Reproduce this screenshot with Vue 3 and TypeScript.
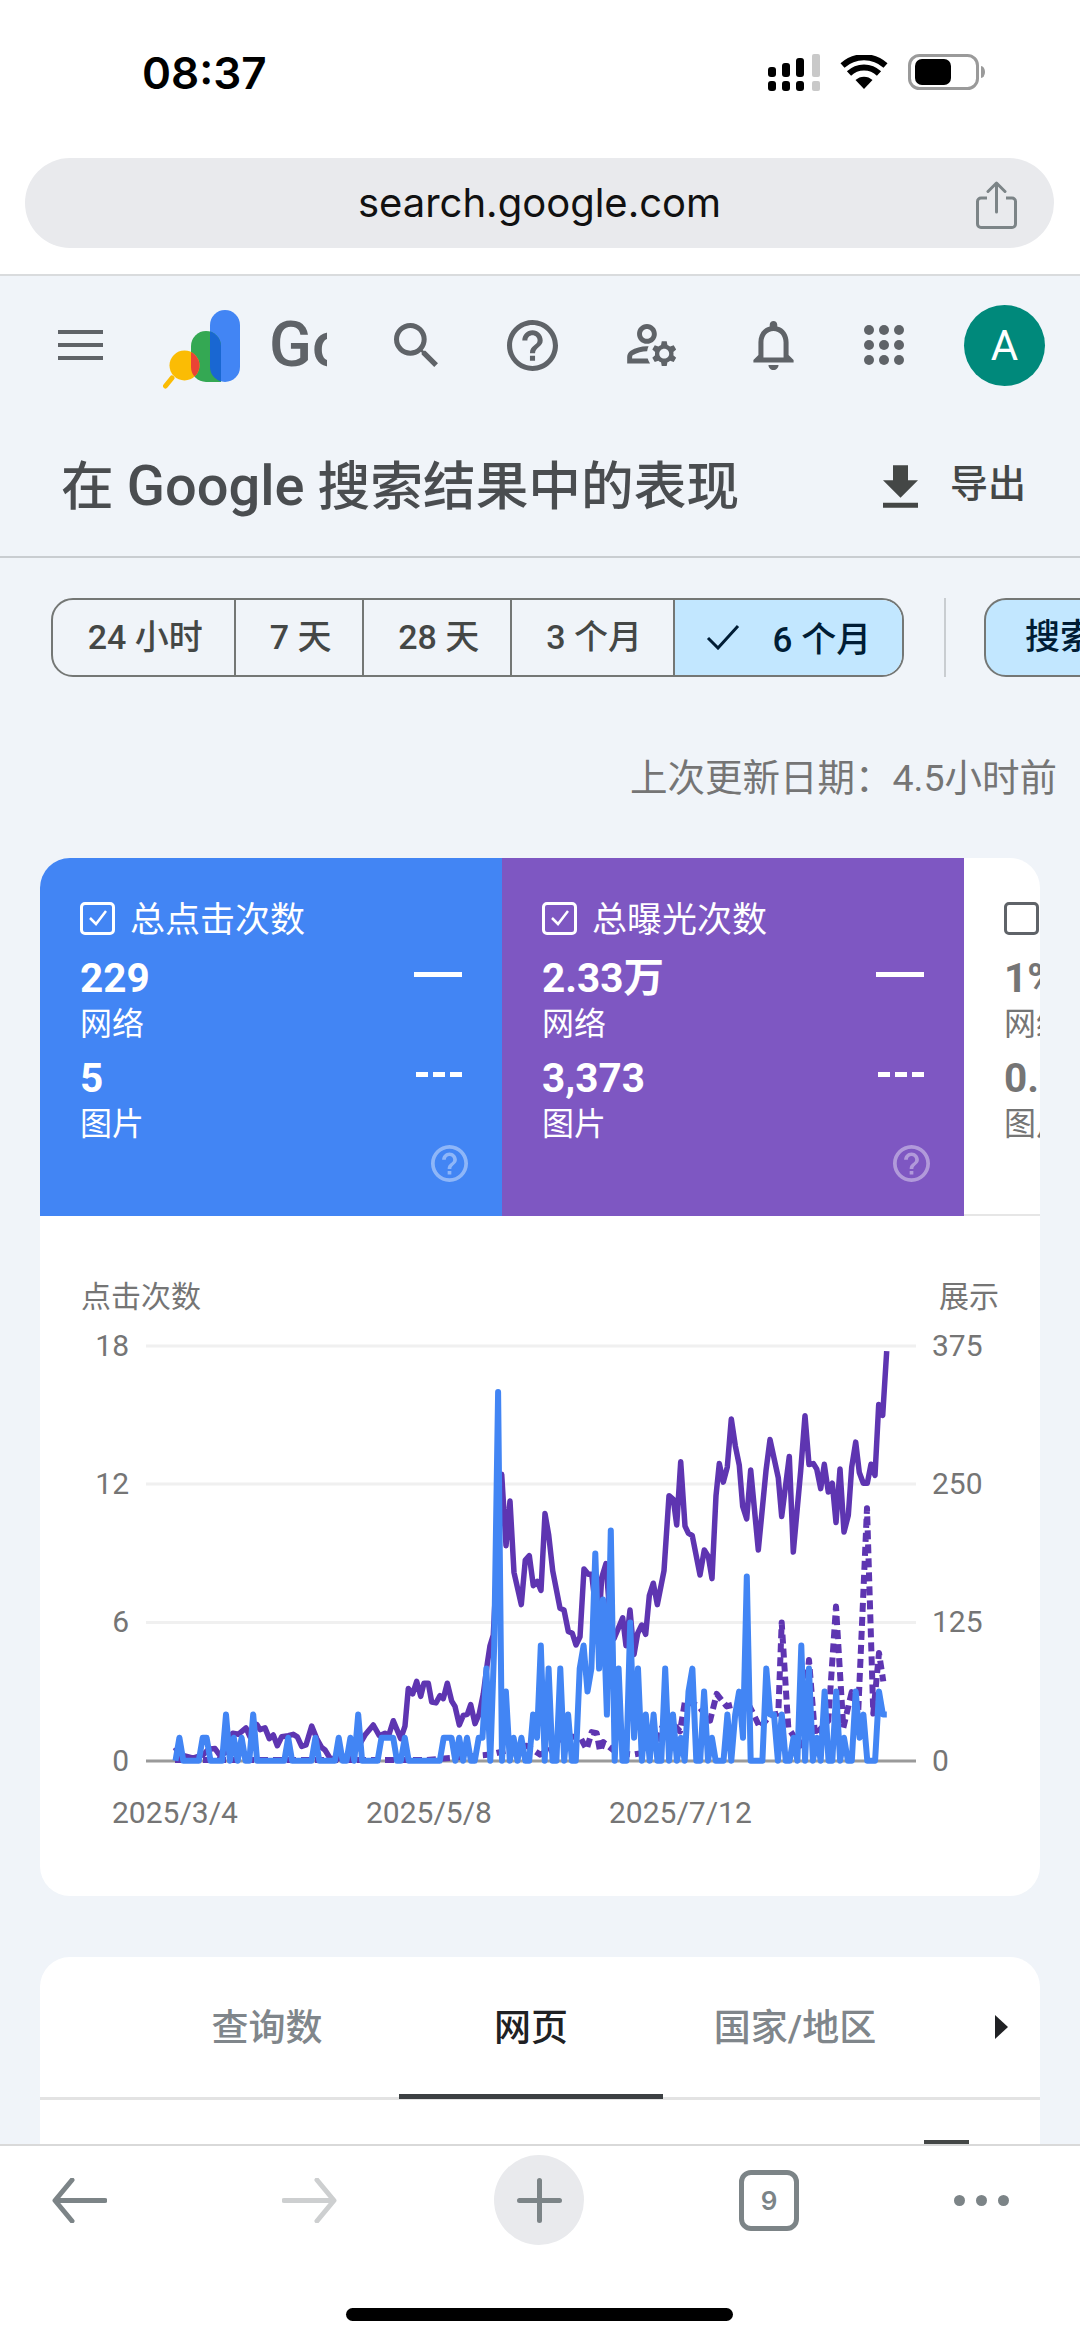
<script setup lang="ts">
type Pt = [number, number]

const chips = [
  { label: '24 小时', width: 183 },
  { label: '7 天', width: 128 },
  { label: '28 天', width: 148 },
  { label: '3 个月', width: 163 },
  { label: '6 个月', width: 227, on: true },
]

const tiles = [
  { cls: 'blue', title: '总点击次数', a: '229', b: '5', checked: true },
  { cls: 'purple', title: '总曝光次数', a: '2.33万', b: '3,373', checked: true },
  { cls: 'plain', title: '平均点击率', a: '1%', b: '0.2%', checked: false },
]

const helpPath =
  'M11 18h2v-2h-2v2zm1-16C6.48 2 2 6.48 2 12s4.48 10 10 10 10-4.48 10-10S17.52 2 12 2zm0 18c-4.41 0-8-3.59-8-8s3.59-8 8-8 8 3.59 8 8-3.59 8-8 8zm0-14c-2.21 0-4 1.79-4 4h2c0-1.1.9-2 2-2s2 .9 2 2c0 2-3 1.75-3 5h2c0-2.25 3-2.5 3-5 0-2.21-1.79-4-4-4z'

const left: Pt[] = [
  [345,1365],[360,1385],[400,1395],[430,1385],[445,1370],[465,1368],[480,1388],[495,1380],[518,1325],[535,1328],[558,1310],[570,1335],[590,1300],[600,1315],[615,1310],[628,1340],[640,1330],[652,1360],[665,1335],[685,1332],[700,1328],[712,1335],[725,1362],[738,1358],[755,1305],[770,1340],[785,1365],[795,1372],[810,1395],[830,1398],[870,1385],[890,1370],[915,1330],[940,1302],[958,1332],[975,1325],[985,1335],[1000,1290],[1022,1340],[1035,1305],[1045,1200],[1058,1215],[1070,1180],[1082,1222],[1092,1185],[1105,1185],[1115,1238],[1128,1240],[1140,1220],[1150,1228],[1162,1185],[1175,1235],[1185,1250],[1198,1302],[1210,1275],[1222,1272],[1232,1245],[1245,1298],[1258,1270],[1270,1215],[1282,1130],[1290,1080],
]
const right: Pt[] = [
  [100,1050],[113,800],[125,600],[138,800],[150,675],[162,875],[184,965],[196,840],[208,828],[220,912],[232,900],[243,925],[255,710],[266,770],[278,870],[300,975],[312,980],[325,1040],[337,1045],[348,1078],[360,1055],[372,865],[385,880],[395,880],[405,960],[418,1000],[425,890],[438,850],[450,1000],[462,1060],[488,1002],[498,1080],[510,980],[522,1105],[533,1045],[545,1022],[557,1048],[568,940],[580,905],[592,965],[612,870],[627,660],[640,670],[650,742],[662,565],[675,745],[685,765],[697,772],[720,882],[733,812],[745,830],[756,892],[768,660],[778,570],[790,622],[802,580],[814,445],[826,520],[838,575],[848,690],[860,725],[872,588],[895,812],[918,590],[930,503],[955,610],[965,718],[988,550],[1000,818],[1022,590],[1035,436],[1047,573],[1060,570],[1070,585],[1082,640],[1093,572],[1105,650],[1117,625],[1128,735],[1140,585],[1152,762],[1165,715],[1175,580],[1187,510],[1198,595],[1210,625],[1222,625],[1233,572],[1245,603],[1256,405],[1268,435],[1280,255],
]
const dashedRight: Pt[] = [
  [-855,1400],[-100,1400],[90,1385],[200,1360],[240,1385],[285,1365],[300,1335],[360,1335],[380,1370],[395,1322],[410,1325],[420,1375],[430,1350],[470,1380],[520,1385],[550,1380],[590,1360],[605,1310],[640,1300],[660,1320],[675,1235],[715,1248],[750,1290],[770,1215],[800,1250],[860,1235],[880,1270],[900,1310],[930,1275],[955,1270],[965,1015],[985,1310],[1020,1360],[1047,1120],[1065,1330],[1105,1290],[1128,970],[1150,1310],[1175,1210],[1195,1260],[1221,695],[1240,1270],[1257,1100],[1270,1180],
]
const peaksLeft: Pt[] = [
  [358,1],[428,1],[440,1],[498,2],[522,1],[545,1],[580,2],[685,1],[767,1],[837,1],[872,1],[895,2],[962,1],[975,1],[985,1],[998,1],[1033,1],[1150,1],[1162,1],[1173,1],[1197,1],[1220,1],
]
const peaksRight: Pt[] = [
  [55,1],[68,1],[80,4],[103,5],[115,16],[138,3],[160,1],[184,1],[218,2],[230,1],[242,5],[265,4],[300,4],[323,2],[358,4],[370,5],[382,3],[393,4],[405,9],[418,4],[428,7],[442,2],[453,10],[475,4],[510,6],[522,1],[533,4],[557,2],[580,2],[615,4],[638,2],[662,1],[685,3],[697,4],[732,3],[755,1],[802,2],[825,2],[837,3],[848,1],[860,8],[918,4],[930,2],[942,2],[965,2],[1000,1],[1022,5],[1047,4],[1070,1],[1093,3],[1128,3],[1152,1],[1187,3],[1198,1],[1210,2],[1257,3],[1268,2],[1280,2],
]

const px = (u: number) => (60 + u / 3).toFixed(1)
const py = (z: number) => (1260 + z / 2.8).toFixed(1)
const toPoints = (pts: Pt[]) => pts.map(([u, z]) => `${px(u)},${py(z)}`).join(' ')
const shift = (pts: Pt[]): Pt[] => pts.map(([u, z]) => [u + 1200, z] as Pt)

const purpleLine = toPoints([...left, ...shift(right)])
const purpleDash = toPoints(shift(dashedRight))

const step = 11.66
const values: number[] = new Array(184).fill(0)
for (const [u, v] of [...peaksLeft, ...shift(peaksRight)]) {
  values[Math.round((u - 346.5) / step)] = v
}
const blueLine = values
  .map((v, i) => `${px(346.5 + i * step)},${py(1402 - v * 64.5)}`)
  .join(' ')

const grid = [
  { y: 1346, l: '18', r: '375' },
  { y: 1484, l: '12', r: '250' },
  { y: 1622.5, l: '6', r: '125' },
]
const dates = [
  { x: 112, t: '2025/3/4' },
  { x: 366, t: '2025/5/8' },
  { x: 609, t: '2025/7/12' },
]
const tabs = [
  { t: '查询数' },
  { t: '网页', on: true },
  { t: '国家/地区' },
]
</script>

<template>
  <div class="phone">
    <header class="chrome">
      <div class="status">
        <span class="time">08:37</span>
        <div class="status-icons">
          <svg class="signal" viewBox="0 0 53 37" width="53" height="37">
            <g fill="#000">
              <rect x="0" y="13" width="8" height="10" rx="3" />
              <rect x="14" y="9" width="8" height="14" rx="3" />
              <rect x="28" y="4" width="8" height="19" rx="3" />
              <rect x="0" y="27" width="8" height="10" rx="3" />
              <rect x="14" y="27" width="8" height="10" rx="3" />
              <rect x="28" y="27" width="8" height="10" rx="3" />
            </g>
            <rect x="44" y="0" width="8" height="23" rx="2" fill="#c9c9c9" />
            <rect x="44" y="27" width="8" height="10" rx="2" fill="#c9c9c9" />
          </svg>
          <svg class="wifi" viewBox="0 0 48 34" width="48" height="34">
            <path d="M24 34 L15.5 25 A12.5 12.5 0 0 1 32.5 25 Z" fill="#000" />
            <path d="M9 18.5 A21.5 21.5 0 0 1 39 18.5" fill="none" stroke="#000" stroke-width="6" />
            <path d="M2.500 10.500 A32 32 0 0 1 45.500 10.500" fill="none" stroke="#000" stroke-width="6" />
          </svg>
          <svg class="battery" viewBox="0 0 77 36" width="77" height="36">
            <rect x="1.500" y="1.500" width="68" height="33" rx="10" fill="none" stroke="#9a9a9a" stroke-width="3" />
            <rect x="7" y="5" width="36" height="26" rx="7" fill="#000" />
            <path d="M73 12 a4 6 0 0 1 0 12 Z" fill="#9a9a9a" />
          </svg>
        </div>
      </div>
      <div class="url">
        <span class="url-text">search.google.com</span>
        <svg class="share" viewBox="0 0 41 48" width="41" height="48">
          <path d="M11 17 H5 a3.500 3.500 0 0 0 -3.500 3.500 V43 a3.500 3.500 0 0 0 3.500 3.500 H36 a3.500 3.500 0 0 0 3.500 -3.500 V20.500 a3.500 3.500 0 0 0 -3.500 -3.500 H30" fill="none" stroke="#7c8487" stroke-width="3" />
          <path d="M20.500 31 V3 M12 10.500 L20.500 2 L29 10.500" fill="none" stroke="#7c8487" stroke-width="3" stroke-linecap="round" stroke-linejoin="round" />
        </svg>
      </div>
    </header>

    <main class="page">
      <nav class="nav">
        <div class="burger"><i></i><i></i><i></i></div>
        <div class="logo">
          <svg viewBox="163 305 80 85" width="80" height="85" class="logo-mark">
            <defs>
              <clipPath id="greenClip"><path d="M191 345 a15 15 0 0 1 30 0 V381 H206 a15 15 0 0 1 -15 -15 Z" /></clipPath>
            </defs>
            <rect x="210" y="309" width="30" height="72" rx="15" fill="#4285f4" />
            <path d="M191 345 a15 15 0 0 1 30 0 V381 H206 a15 15 0 0 1 -15 -15 Z" fill="#34a853" />
            <rect x="210" y="309" width="30" height="72" rx="15" fill="#1967d2" clip-path="url(#greenClip)" />
            <path d="M172 377 L165.500 385" stroke="#fbbc04" stroke-width="5" stroke-linecap="round" />
            <circle cx="184.500" cy="364.500" r="15" fill="#fbbc04" />
            <circle cx="184.500" cy="364.500" r="15" fill="#ea4335" clip-path="url(#greenClip)" />
          </svg>
          <span class="logo-text">Google</span>
        </div>
        <svg class="ic search" viewBox="3 3 17.500 17.500" width="44" height="44"><path d="M15.500 14h-.79l-.28-.27A6.471 6.471 0 0 0 16 9.500 6.500 6.500 0 1 0 9.500 16c1.610 0 3.090-.59 4.230-1.570l.27.28v.79l5 4.990L20.490 19l-4.990-5zm-6 0C7.010 14 5 11.990 5 9.500S7.010 5 9.500 5 14 7.010 14 9.500 11.990 14 9.500 14z" /></svg>
        <svg class="ic help" viewBox="2 2 20 20" width="51" height="51"><path :d="helpPath" /></svg>
        <svg class="ic person" viewBox="2 4 20.500 17" width="51" height="42"><path d="M4 18v-.65c0-.34.16-.66.41-.81C6.100 15.530 8.030 15 10 15c.03 0 .05 0 .08.01.1-.7.3-1.370.59-1.980-.22-.02-.44-.03-.67-.03-2.420 0-4.680.67-6.610 1.820-.88.52-1.390 1.500-1.390 2.530V20h9.260c-.42-.6-.75-1.280-.97-2H4zM10 12c2.210 0 4-1.790 4-4s-1.790-4-4-4-4 1.790-4 4 1.790 4 4 4zm0-6c1.100 0 2 .9 2 2s-.9 2-2 2-2-.9-2-2 .9-2 2-2z M20.750 16c0-.22-.03-.42-.06-.63l1.140-1.010-1-1.730-1.450.49c-.32-.27-.68-.48-1.080-.63L18 11h-2l-.3 1.490c-.4.15-.76.36-1.080.63l-1.450-.49-1 1.730 1.140 1.010c-.03.21-.06.41-.06.63s.03.42.06.63l-1.140 1.010 1 1.730 1.450-.49c.32.27.68.48 1.080.63L16 21h2l.3-1.490c.4-.15.76-.36 1.080-.63l1.450.49 1-1.730-1.140-1.010c.03-.21.06-.41.06-.63zM17 18c-1.100 0-2-.9-2-2s.9-2 2-2 2 .9 2 2-.9 2-2 2z" /></svg>
        <svg class="ic bell" viewBox="4 2.500 16 19.500" width="41" height="49"><path d="M12 22c1.100 0 2-.9 2-2h-4c0 1.100.9 2 2 2zm6-6v-5c0-3.070-1.630-5.640-4.500-6.320V4c0-.83-.67-1.500-1.500-1.500s-1.500.67-1.500 1.500v.68C7.640 5.360 6 7.920 6 11v5l-2 2v1h16v-1l-2-2zm-2 1H8v-6c0-2.480 1.510-4.500 4-4.500s4 2.020 4 4.500v6z" /></svg>
        <svg class="ic apps" viewBox="0 0 40 40" width="40" height="40">
          <template v-for="cy in [5, 20, 35]" :key="cy">
            <circle v-for="cx in [5, 20, 35]" :key="cx" :cx="cx" :cy="cy" r="5" />
          </template>
        </svg>
        <div class="avatar">A</div>
      </nav>

      <section class="title-row">
        <h1 class="title">在 <span class="g">Google</span> 搜索结果中的表现</h1>
        <div class="export">
          <svg viewBox="5 3 14 17" width="35" height="43"><path d="M5 20h14v-2H5v2zM19 9h-4V3H9v6H5l7 7 7-7z" /></svg>
          <span class="export-label">导出</span>
        </div>
      </section>

      <section class="filters">
        <div class="chips">
          <div
            v-for="c in chips"
            :key="c.label"
            class="chip"
            :class="{ on: c.on }"
            :style="{ width: c.width + 'px' }"
          >
            <svg v-if="c.on" class="check" viewBox="0 0 34 26" width="34" height="26">
              <path d="M2 14 L12 24 L32 2" fill="none" stroke="#001d35" stroke-width="3" />
            </svg>
            {{ c.label }}
          </div>
        </div>
        <div class="divider"></div>
        <div class="chip-search">搜索类型</div>
      </section>

      <p class="updated">上次更新日期：4.5小时前</p>

      <section class="card">
        <div class="tiles">
          <div v-for="t in tiles" :key="t.title" class="tile" :class="t.cls">
            <div class="tile-title">
              <span class="box">
                <svg v-if="t.checked" viewBox="0 0 20 18" width="20" height="18"><path d="M2 9 L8 15 L18 2" fill="none" stroke="#fff" stroke-width="2.500" /></svg>
              </span>
              <span class="tile-name">{{ t.title }}</span>
            </div>
            <div class="val-row first"><b>{{ t.a }}</b><i class="solid"></i></div>
            <div class="lab first-lab">网络</div>
            <div class="val-row second"><b>{{ t.b }}</b><i class="dash"></i></div>
            <div class="lab second-lab">图片</div>
            <svg class="tile-help" viewBox="2 2 20 20" width="37" height="37"><path :d="helpPath" /></svg>
          </div>
        </div>
        <svg class="chart" viewBox="40 1216 1000 680" width="1000" height="680">
          <text x="81" y="1296" class="axis">点击次数</text>
          <text x="999" y="1296" class="axis" text-anchor="end">展示</text>
          <g v-for="g in grid" :key="g.y">
            <line x1="146" x2="916" :y1="g.y" :y2="g.y" stroke="#f0f0f0" stroke-width="3" />
            <text x="129" :y="g.y - 1" class="axis" text-anchor="end">{{ g.l }}</text>
            <text x="932" :y="g.y - 1" class="axis">{{ g.r }}</text>
          </g>
          <line x1="146" x2="916" y1="1761" y2="1761" stroke="#9a9a9a" stroke-width="3" />
          <text x="129" y="1760" class="axis" text-anchor="end">0</text>
          <text x="932" y="1760" class="axis">0</text>
          <text v-for="d in dates" :key="d.t" :x="d.x" y="1812" class="axis">{{ d.t }}</text>
          <polyline :points="purpleDash" class="pd" />
          <polyline :points="purpleLine" class="pl" />
          <polyline :points="blueLine" class="bl" />
        </svg>
      </section>

      <section class="card second-card">
        <div class="tabs">
          <div v-for="t in tabs" :key="t.t" class="tab" :class="{ on: t.on }">{{ t.t }}</div>
          <span class="tri"></span>
        </div>
        <div class="peek"></div>
      </section>
    </main>

    <footer class="bottom">
      <div class="tools">
        <svg class="back" viewBox="0 0 55 45" width="55" height="45">
          <path d="M53 22.500 H4 M20 2 L3 22.500 L20 43" fill="none" stroke="#7c8487" stroke-width="5" stroke-linecap="round" stroke-linejoin="round" />
        </svg>
        <svg class="fwd" viewBox="0 0 55 45" width="55" height="45">
          <path d="M2 22.500 H51 M35 2 L52 22.500 L35 43" fill="none" stroke="#cdcfd0" stroke-width="5" stroke-linecap="round" stroke-linejoin="round" />
        </svg>
        <div class="plus">
          <svg viewBox="0 0 45 45" width="45" height="45">
            <path d="M2.500 22.500 H42.500 M22.500 2.500 V42.500" stroke="#7c8487" stroke-width="5" stroke-linecap="round" />
          </svg>
        </div>
        <div class="tabs-count">9</div>
        <div class="more"><i></i><i></i><i></i></div>
      </div>
      <div class="home"></div>
    </footer>
  </div>
</template>

<style scoped>
.phone {
  width: 1080px;
  height: 2341px;
  display: flex;
  flex-direction: column;
  overflow: hidden;
  background: #fff;
  font-family: Roboto, "Noto Sans CJK SC", sans-serif;
  color: #3c4043;
}
.chrome { height: 274px; flex: none; background: #fff; }
.status {
  height: 158px;
  display: flex;
  align-items: flex-start;
  justify-content: space-between;
  box-sizing: border-box;
  padding: 46px 95px 0 142px;
}
.time {
  font: 600 44px/54px Inter, sans-serif;
  color: #000;
}
.status-icons { display: flex; align-items: flex-start; padding-top: 8px; }
.signal { display: block; }
.wifi { display: block; margin-left: 19px; margin-top: 1px; }
.battery { display: block; margin-left: 20px; }
.url {
  height: 90px;
  margin: 0 26px 0 25px;
  border-radius: 45px;
  background: #e9eaed;
  display: flex;
  align-items: center;
  position: relative;
  justify-content: center;
}
.url-text {
  font: 400 40px/50px Inter, sans-serif;
  color: #111;
}
.share { position: absolute; right: 37px; top: 23px; }

.page {
  flex: 1;
  min-height: 0;
  overflow: hidden;
  background: #f0f4f9;
  border-top: 2px solid #d9dbdd;
  box-sizing: border-box;
}
.nav {
  height: 140px;
  box-sizing: border-box;
  padding-bottom: 2px;
  display: flex;
  align-items: center;
  padding-left: 58px;
}
.burger { width: 45px; display: flex; flex-direction: column; gap: 9px; }
.burger i { display: block; height: 4px; background: #5f6368; }
.logo { margin-left: 60px; display: flex; align-items: center; width: 164px; height: 85px; }
.logo-mark { flex: none; margin-top: 6px; }
.logo-text {
  display: block;
  margin-left: 26px;
  width: 58px;
  overflow: hidden;
  white-space: nowrap;
  font: 500 63px/72px Roboto, sans-serif;
  color: #5f6368;
  flex: none;
}
.ic { display: block; fill: #5f6368; flex: none; }
.search { margin-left: 67px; }
.help { margin-left: 69px; }
.person { margin-left: 69px; }
.bell { margin-left: 75px; }
.apps { margin-left: 70px; }
.avatar {
  margin-left: 60px;
  width: 81px;
  height: 81px;
  border-radius: 50%;
  background: #00897b;
  color: #fff;
  font: 400 42px/81px Roboto, sans-serif;
  text-align: center;
  flex: none;
}
.title-row {
  height: 142px;
  display: flex;
  align-items: center;
  justify-content: space-between;
  box-sizing: border-box;
  border-bottom: 2px solid #c9cdd1;
  padding: 0 54px 0 61px;
}
.title {
  margin: 0;
  font-size: 52.700px;
  font-weight: 500;
  line-height: 70px;
  color: #4a4d50;
}
.title .g { font-size: 56px; font-weight: 500; }
.export { display: flex; align-items: center; gap: 32px; font-size: 38px; font-weight: 500; color: #444746; }
.export svg { fill: #444746; display: block; }
.export-label { display: block; line-height: 50px; padding-bottom: 5px; }
.filters {
  display: flex;
  align-items: stretch;
  padding: 40px 0 0 51px;
  height: 79px;
}
.chips {
  display: flex;
  border: 2px solid #747775;
  border-radius: 22px;
  overflow: hidden;
  flex: none;
  box-sizing: border-box;
}
.chip {
  display: flex;
  align-items: center;
  justify-content: center;
  box-sizing: border-box;
  font-size: 34px;
  font-weight: 500;
  color: #444746;
  border-right: 2px solid #747775;
  white-space: pre;
  padding: 0 5px 6px 0;
}
.chip:last-child { border-right: none; }
.chip.on { background: #c2e7ff; color: #001d35; font-size: 35px; padding: 0 0 2px 0; }
.check { margin-right: 24px; }
.divider { width: 2px; background: #c9cdd1; margin-left: 40px; flex: none; }
.chip-search {
  margin-left: 38px;
  flex: none;
  background: #c2e7ff;
  border: 2px solid #747775;
  border-radius: 22px;
  padding: 0 39px;
  font-size: 35px;
  font-weight: 500;
  line-height: 75px;
  color: #001d35;
  white-space: nowrap;
}
.updated {
  margin: 76px 23px 55px 0;
  text-align: right;
  font-size: 37.500px;
  line-height: 50px;
  color: #757575;
}
.card {
  margin: 0 40px;
  background: #fff;
  border-radius: 30px;
  overflow: hidden;
}
.tiles { display: flex; height: 358px; overflow: hidden; }
.tile {
  flex: 0 0 462px;
  box-sizing: border-box;
  padding-left: 40px;
  padding-top: 38px;
  color: #fff;
  display: flex;
  flex-direction: column;
}
.tile.blue { background: #4285f4; }
.tile.purple { background: #7e57c2; }
.tile.plain { color: #757575; flex: 0 0 76px; padding-right: 0; overflow: hidden; border-bottom: 2px solid #e6e6e6; white-space: nowrap; }
.tile-title { display: flex; align-items: center; gap: 15px; height: 40px; font-size: 35px; white-space: nowrap; }
.box {
  width: 35px;
  height: 33px;
  box-sizing: border-box;
  border: 3px solid #fff;
  border-radius: 5px;
  display: flex;
  align-items: center;
  justify-content: center;
  flex: none;
  margin-top: 4px;
}
.plain .box { border-color: #5f6368; }
.val-row {
  display: flex;
  align-items: center;
  justify-content: space-between;
  height: 44px;
  padding-right: 40px;
}
.val-row b { font-size: 40.500px; font-weight: 700; line-height: 44px; }
.val-row.first { margin-top: 20px; }
.val-row.second { margin-top: 12px; }
.lab { font-size: 32px; line-height: 40px; height: 40px; }
.first-lab { margin-top: 4px; }
.second-lab { margin-top: 4px; }
.solid { display: block; width: 48px; height: 5px; background: #fff; margin-top: -8px; }
.dash {
  display: block;
  width: 46px;
  height: 5px;
  margin-top: -7px;
  background: repeating-linear-gradient(90deg, #fff 0 12px, transparent 12px 17px);
}
.plain .solid, .plain .dash { display: none; }
.tile-help { display: block; fill: #fff; opacity: 0.4; align-self: flex-end; margin: 1px 34px 0 0; flex: none; }
.plain .tile-help { display: none; }
.chart { display: block; }
.axis {
  font-family: Roboto, "Noto Sans CJK SC", sans-serif;
  font-size: 30px;
  fill: #757575;
  dominant-baseline: central;
}
.pl, .pd, .bl { fill: none; stroke-linejoin: round; }
.pl { stroke: #5e35b1; stroke-width: 5.500; }
.pd { stroke: #5e35b1; stroke-width: 6; stroke-dasharray: 9 5; }
.bl { stroke: #4285f4; stroke-width: 6; }
.second-card { margin-top: 61px; height: 400px; border-radius: 30px 30px 0 0; }
.tabs {
  display: flex;
  align-items: center;
  height: 143px;
  box-sizing: border-box;
  padding-left: 95px;
  border-bottom: 3px solid #e3e3e3;
}
.tab {
  width: 264px;
  height: 140px;
  margin-bottom: -3px;
  line-height: 140px;
  text-align: center;
  font-size: 37px;
  font-weight: 500;
  color: #80868b;
  box-sizing: border-box;
}
.tab.on { color: #202124; border-bottom: 5px solid #3c4043; }
.tri {
  margin-left: 68px;
  width: 0;
  height: 0;
  border-left: 13px solid #202124;
  border-top: 12px solid transparent;
  border-bottom: 12px solid transparent;
}
.peek { width: 45px; height: 10px; margin: 40px 0 0 884px; background: #444746; }
.bottom {
  height: 197px;
  flex: none;
  background: #fff;
  border-top: 2px solid #d9d9d9;
  box-sizing: border-box;
  position: relative;
  z-index: 1;
}
.tools {
  display: flex;
  align-items: center;
  height: 108px;
  padding: 0 0 0 52px;
}
.back, .fwd { display: block; flex: none; }
.fwd { margin-left: 175px; }
.plus {
  margin-left: 157px;
  width: 90px;
  height: 90px;
  border-radius: 50%;
  background: #e9eaed;
  display: flex;
  align-items: center;
  justify-content: center;
  flex: none;
}
.plus svg { display: block; }
.tabs-count {
  margin-left: 155px;
  width: 60px;
  height: 61px;
  box-sizing: border-box;
  border: 5px solid #7c8487;
  border-radius: 12px;
  text-align: center;
  font: 600 26px/51px Inter, sans-serif;
  color: #7c8487;
  flex: none;
}
.more { margin-left: 155px; display: flex; gap: 11px; flex: none; }
.more i { display: block; width: 11px; height: 11px; border-radius: 50%; background: #7c8487; }
.home {
  position: absolute;
  left: 346px;
  top: 162px;
  width: 387px;
  height: 13px;
  border-radius: 7px;
  background: #000;
}
</style>
